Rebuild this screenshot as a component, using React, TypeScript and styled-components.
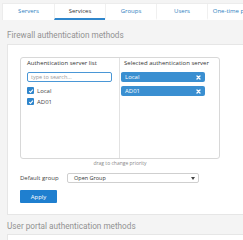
import React from 'react';
import styled, {createGlobalStyle} from "styled-components";

const GlobalStyle = createGlobalStyle`
  html, body {
    margin: 0;
    padding: 0;
    background: #f4f4f4;
    overflow: hidden;
  }
  body {
    font-family: "Open Sans", "Noto Sans", sans-serif;
    color: #333;
  }
`

const tabs = ["Servers", "Services", "Groups", "Users", "One-time pass"];

const Page = styled.div`
    width: 300px;
    padding: 3px 0 0 0;
`
const TabBar = styled.div`
    margin-left: 2px;
    height: 17px;
    display: flex;
    background: #fff;
    border: 1px solid #ececec;
    border-bottom: none;
    box-sizing: border-box;
`
const Tab = styled.div<{ $active?: boolean }>`
    width: 51px;
    flex-shrink: 0;
    display: flex;
    align-items: center;
    justify-content: center;
    font-size: 6px;
    color: ${p => p.$active ? "#333" : "#2f7fc1"};
    border-left: 1px solid #f0f0f0;
    border-bottom: 2px solid ${p => p.$active ? "#2f86cc" : "transparent"};
    box-sizing: border-box;
    white-space: nowrap;

    &:first-child {
        border-left: none;
    }
`
const Heading = styled.h2`
    margin: 8px 0 2px 7px;
    font-family: Roboto, "Open Sans", sans-serif;
    font-size: 8.2px;
    line-height: 14px;
    font-weight: 400;
    color: #929292;
`
const Panel = styled.div`
    margin-left: 7px;
    background: #fff;
    border: 1px solid #e6e6e6;
    padding: 12px 0 11px 12px;
`
const EmptyPanel = styled(Panel)`
    height: 20px;
    padding: 0;
`
const ListBox = styled.div`
    width: 200px;
    height: 102px;
    box-sizing: border-box;
    border: 1px solid #d8d8d8;
    border-radius: 3px;
    display: grid;
    grid-template-columns: 98px 1fr;
`
const Column = styled.div`
    padding: 0 6px;

    & + & {
        border-left: 1px solid #e2e2e2;
        padding: 0 1px;
    }
`
const ColumnTitle = styled.div`
    font-size: 6px;
    line-height: 10px;
    color: #333;
    white-space: nowrap;
    padding: 0 3px 0 0;
    & + * {
        margin-top: 4px;
    }
`
const RightTitle = styled(ColumnTitle)`
    padding-left: 3px;
`
const Search = styled.input`
    display: block;
    width: 85px;
    height: 10px;
    box-sizing: border-box;
    border: 1px solid #4a97d6;
    border-radius: 2px;
    padding: 0 3px;
    font-family: inherit;
    font-size: 5.5px;
    outline: none;

    &::placeholder {
        color: #999;
    }
`
const CheckList = styled.div`
    margin-top: 3px;
`
const CheckRow = styled.label`
    display: flex;
    align-items: center;
    height: 11px;
    font-size: 6px;
    color: #444;
    gap: 3px;
`
const Box = styled.span`
    width: 7px;
    height: 7px;
    border-radius: 1px;
    background: #2f86cc;
    display: flex;
    align-items: center;
    justify-content: center;
`
const Chips = styled.div`
    display: flex;
    flex-direction: column;
    gap: 4px;
    margin-top: 4px;
`
const Chip = styled.div`
    width: 84px;
    height: 10px;
    box-sizing: border-box;
    background: #3a8fd1;
    border-radius: 2px;
    color: #fff;
    font-size: 6px;
    display: flex;
    align-items: center;
    justify-content: space-between;
    padding: 0 4px 0 4px;
`
const Hint = styled.div`
    width: 200px;
    text-align: center;
    font-size: 5px;
    line-height: 8px;
    color: #888;
`
const FieldRow = styled.div`
    display: flex;
    align-items: center;
    margin-top: 6px;
    font-size: 6px;
    color: #444;
`
const FieldLabel = styled.span`
    width: 47px;
`
const Select = styled.div`
    width: 132px;
    height: 10px;
    box-sizing: border-box;
    border: 1px solid #cfcfcf;
    border-radius: 2px;
    display: flex;
    align-items: center;
    justify-content: space-between;
    padding: 0 3px 0 6px;
    font-size: 5.5px;
    color: #333;
`
const ApplyButton = styled.button`
    display: block;
    margin-top: 7px;
    width: 37px;
    height: 13px;
    border: none;
    border-radius: 1px;
    background: #1f7fcf;
    color: #fff;
    font-family: inherit;
    font-size: 6px;
    padding: 0;
`
const Heading2 = styled(Heading)`
    margin-top: 4px;
    margin-bottom: 1px;
`

const Check = () => (
    <svg width="6" height="6" viewBox="0 0 10 10">
        <path d="M2 5.2 L4.2 7.3 L8.2 2.8" fill="none" stroke="#fff" strokeWidth="1.8"/>
    </svg>
);

const Cross = () => (
    <svg width="5" height="5" viewBox="0 0 10 10">
        <path d="M2 2 L8 8 M8 2 L2 8" fill="none" stroke="#fff" strokeWidth="2.6" strokeLinecap="round"/>
    </svg>
);

const Caret = () => (
    <svg width="4" height="3" viewBox="0 0 8 6">
        <path d="M0 0 H8 L4 6 Z" fill="#444"/>
    </svg>
);

export default function App() {
    return (
        <Page>
            <GlobalStyle/>
            <TabBar>
                {tabs.map(t => <Tab key={t} $active={t === "Services"}>{t}</Tab>)}
            </TabBar>
            <Heading>Firewall authentication methods</Heading>
            <Panel>
                <ListBox>
                    <Column>
                        <ColumnTitle>Authentication server list</ColumnTitle>
                        <Search placeholder="type to search..."/>
                        <CheckList>
                            <CheckRow><Box><Check/></Box>Local</CheckRow>
                            <CheckRow><Box><Check/></Box>AD01</CheckRow>
                        </CheckList>
                    </Column>
                    <Column>
                        <RightTitle>Selected authentication server</RightTitle>
                        <Chips>
                            <Chip>Local<Cross/></Chip>
                            <Chip>AD01<Cross/></Chip>
                        </Chips>
                    </Column>
                </ListBox>
                <Hint>drag to change priority</Hint>
                <FieldRow>
                    <FieldLabel>Default group</FieldLabel>
                    <Select>Open Group<Caret/></Select>
                </FieldRow>
                <ApplyButton>Apply</ApplyButton>
            </Panel>
            <Heading2>User portal authentication methods</Heading2>
            <EmptyPanel/>
        </Page>
    );
}
